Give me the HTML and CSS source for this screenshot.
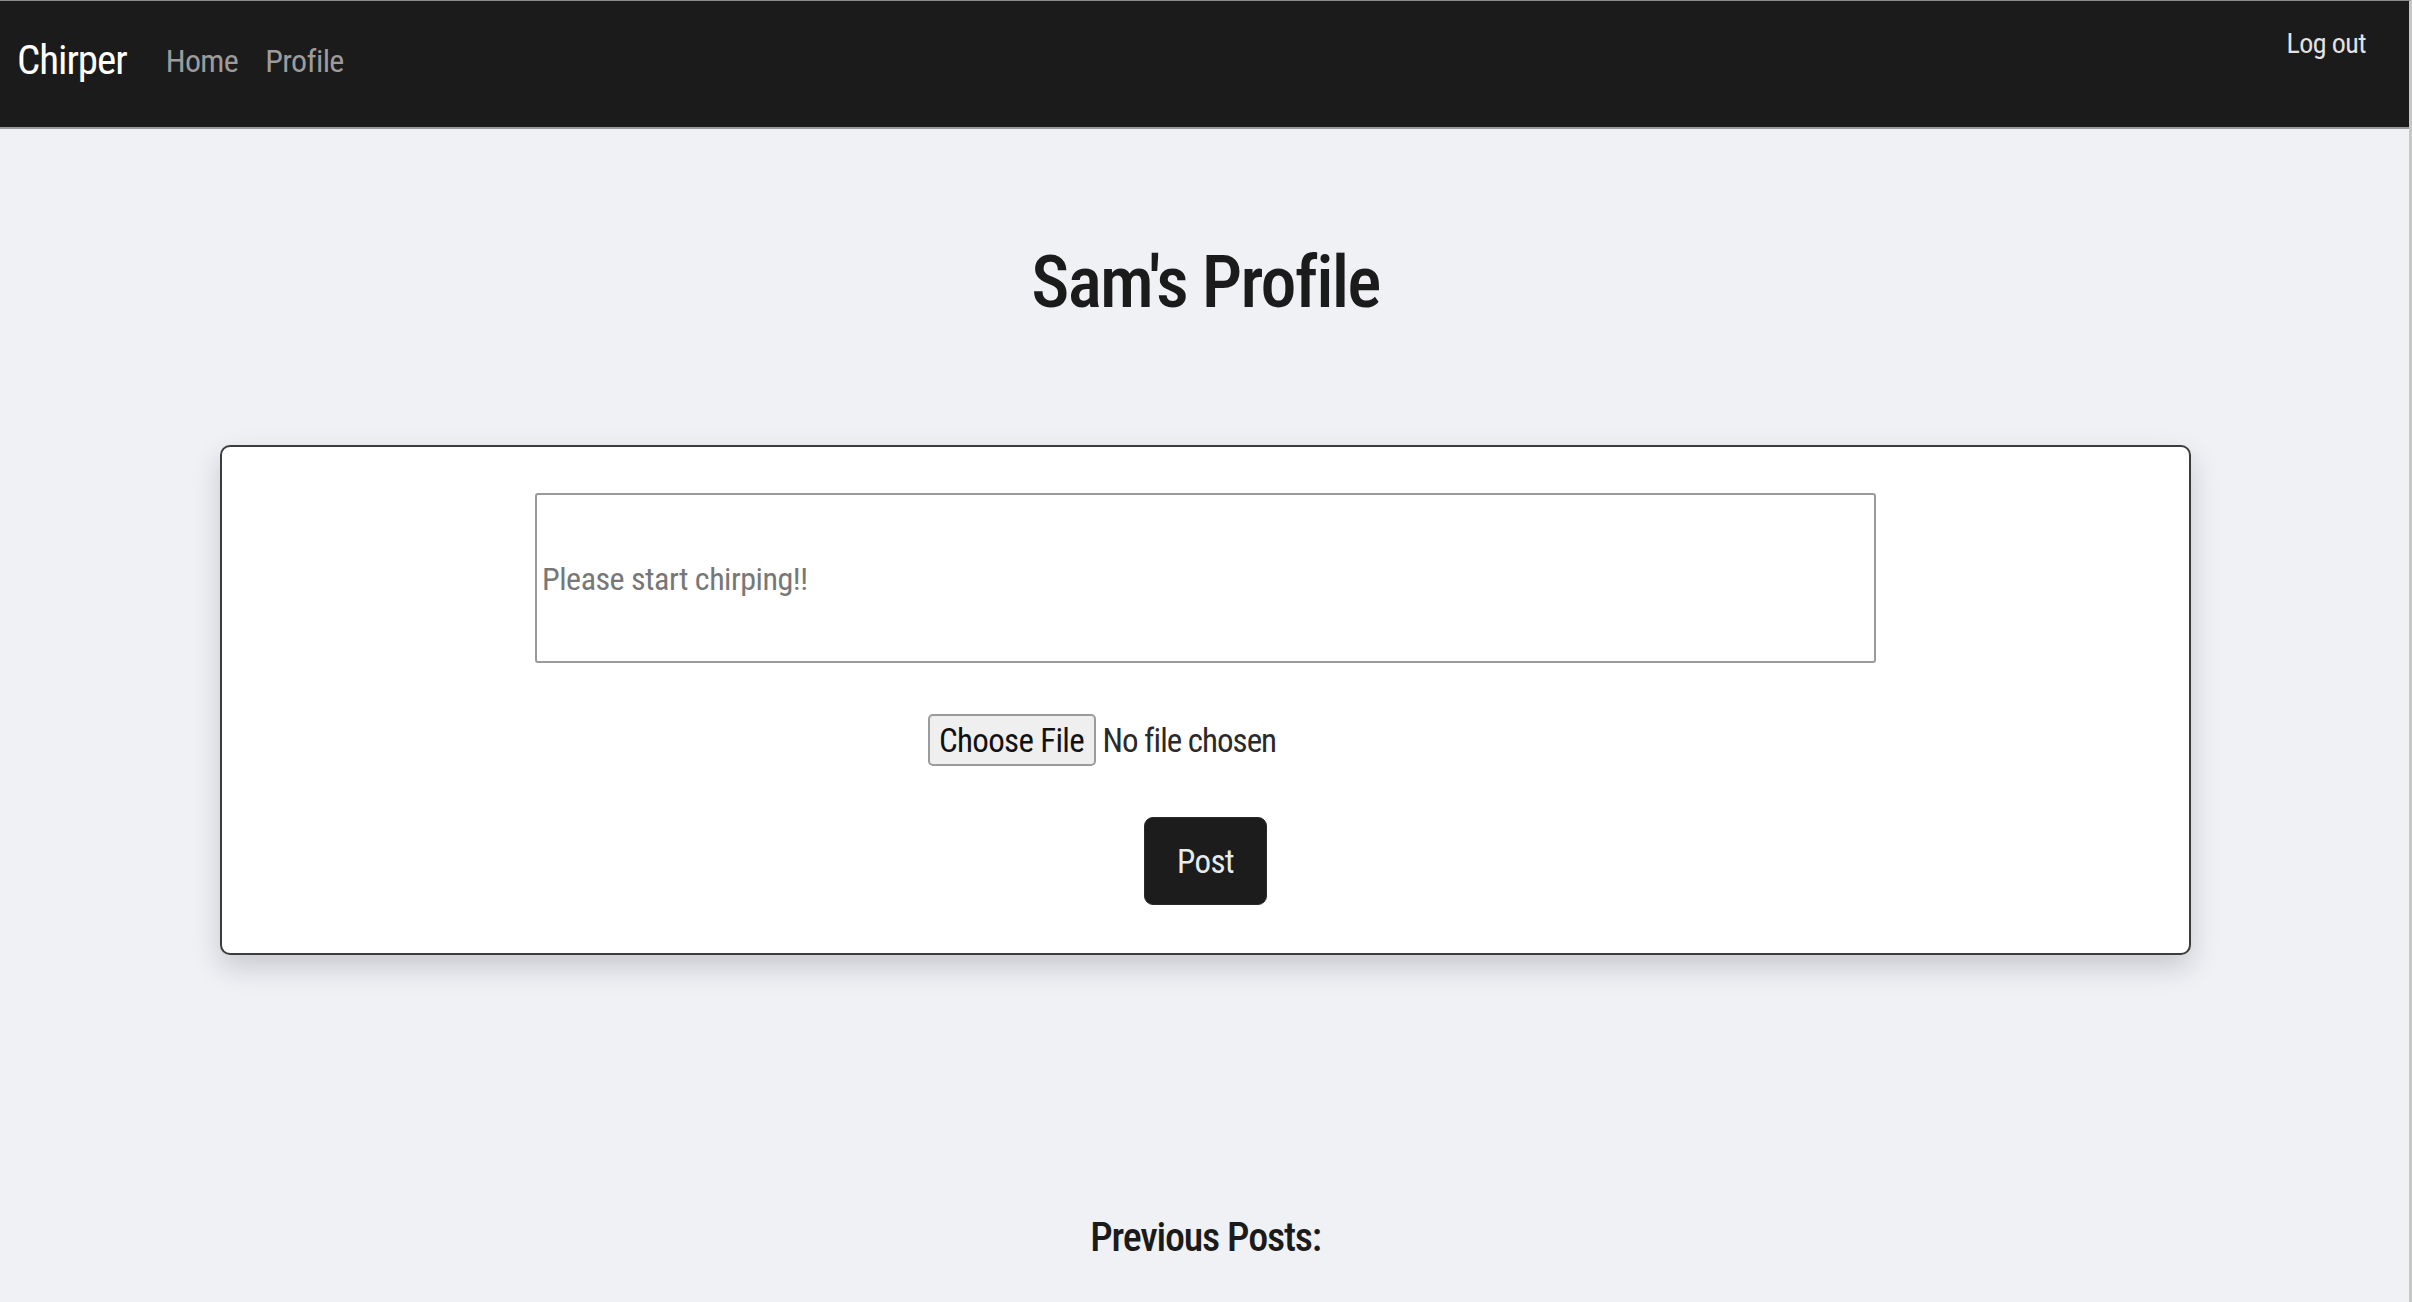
FILE: index.html
```html
<!DOCTYPE html>
<html lang="en">
<head>
<meta charset="utf-8">
<title>Chirper</title>
<link rel="stylesheet" href="styles.css">
</head>
<body>
<div class="frame">
  <nav class="navbar">
    <div class="nav-left">
      <a class="brand" href="#">Chirper</a>
      <a class="nav-link" href="#">Home</a>
      <a class="nav-link" href="#">Profile</a>
    </div>
    <a class="logout" href="#">Log out</a>
  </nav>

  <main class="main">
    <h1 class="title">Sam's Profile</h1>

    <section class="card">
      <textarea class="chirp-input" placeholder="Please start chirping!!"></textarea>
      <div class="file-row">
        <button class="file-btn" type="button">Choose File</button>
        <span class="file-name">No file chosen</span>
      </div>
      <button class="post-btn" type="button">Post</button>
    </section>

    <h2 class="prev-title">Previous Posts:</h2>
  </main>
</div>
</body>
</html>
```
FILE: styles.css
```css
* { box-sizing: border-box; }

html, body {
  margin: 0;
  padding: 0;
  background: #f0f1f5;
}

body {
  font-family: Roboto, "Liberation Sans", sans-serif;
  font-stretch: 75%;
  color: #1b1b1b;
}

.frame {
  min-height: 100vh;
  border-top: 1px solid #8a8a8a;
  border-right: 3px solid #c6c6c6;
}

a { text-decoration: none; }

/* ---------- navbar ---------- */
.navbar {
  display: flex;
  justify-content: space-between;
  align-items: flex-start;
  height: 128px;
  background: #1b1b1b;
  border-bottom: 2px solid #9a9c9c;
  padding: 0 43px 0 17px;
}

.nav-left {
  display: flex;
  align-items: center;
  height: 120px;
}

.brand {
  color: #ffffff;
  font-size: 41px;
  line-height: 1.2;
  letter-spacing: -0.025em;
  margin-right: 39px;
}

.nav-link {
  color: #9c9c9c;
  font-size: 32px;
  line-height: 1.2;
  letter-spacing: -0.02em;
  margin-right: 27px;
}

.logout {
  color: #e2e2e2;
  font-size: 28px;
  line-height: 1.2;
  letter-spacing: -0.02em;
  margin-top: 26px;
}

/* ---------- main ---------- */
.main {
  display: flex;
  flex-direction: column;
  align-items: center;
  padding: 0 218px 40px 220px;
}

.title {
  margin: 111px 0 0;
  font-size: 72px;
  line-height: 1.2;
  font-weight: 500;
  letter-spacing: -0.025em;
  color: #1b1b1b;
}

.card {
  align-self: stretch;
  margin-top: 119px;
  background: #ffffff;
  border: 2px solid #3c3c3c;
  border-radius: 10px;
  box-shadow: 0 12px 28px rgba(20, 24, 40, 0.18);
  padding: 46px 0 48px;
  display: flex;
  flex-direction: column;
  align-items: center;
}

.chirp-input {
  width: 1341px;
  height: 170px;
  resize: none;
  border: 2px solid #9a9a9a;
  border-radius: 3px;
  padding: 65px 5px 0;
  font-family: Roboto, "Liberation Sans", sans-serif;
  font-stretch: 75%;
  font-size: 32px;
  line-height: 38px;
  letter-spacing: -0.015em;
  color: #333;
  background: #fff;
  outline: none;
}

.chirp-input::placeholder {
  color: #777777;
}

.file-row {
  width: 556px;
  margin-top: 51px;
  display: flex;
  align-items: center;
  gap: 7px;
}

.file-btn {
  height: 52px;
  width: 168px;
  padding: 0;
  background: #efefef;
  border: 2px solid #9b9b9b;
  border-radius: 5px;
  font-family: Roboto, "Liberation Sans", sans-serif;
  font-stretch: 75%;
  font-size: 33px;
  letter-spacing: -0.02em;
  color: #111;
}

.file-name {
  font-size: 33px;
  letter-spacing: -0.03em;
  color: #2a2a2a;
}

.post-btn {
  margin-top: 51px;
  width: 123px;
  height: 88px;
  padding: 0;
  background: #1c1c1c;
  border: 1px solid #2a2a2a;
  border-radius: 9px;
  color: #e6ecec;
  font-family: Roboto, "Liberation Sans", sans-serif;
  font-stretch: 75%;
  font-size: 33px;
  letter-spacing: -0.02em;
}

.prev-title {
  margin: 259px 0 0;
  font-size: 40px;
  line-height: 1.2;
  font-weight: 500;
  letter-spacing: -0.03em;
  color: #1b1b1b;
}
```
